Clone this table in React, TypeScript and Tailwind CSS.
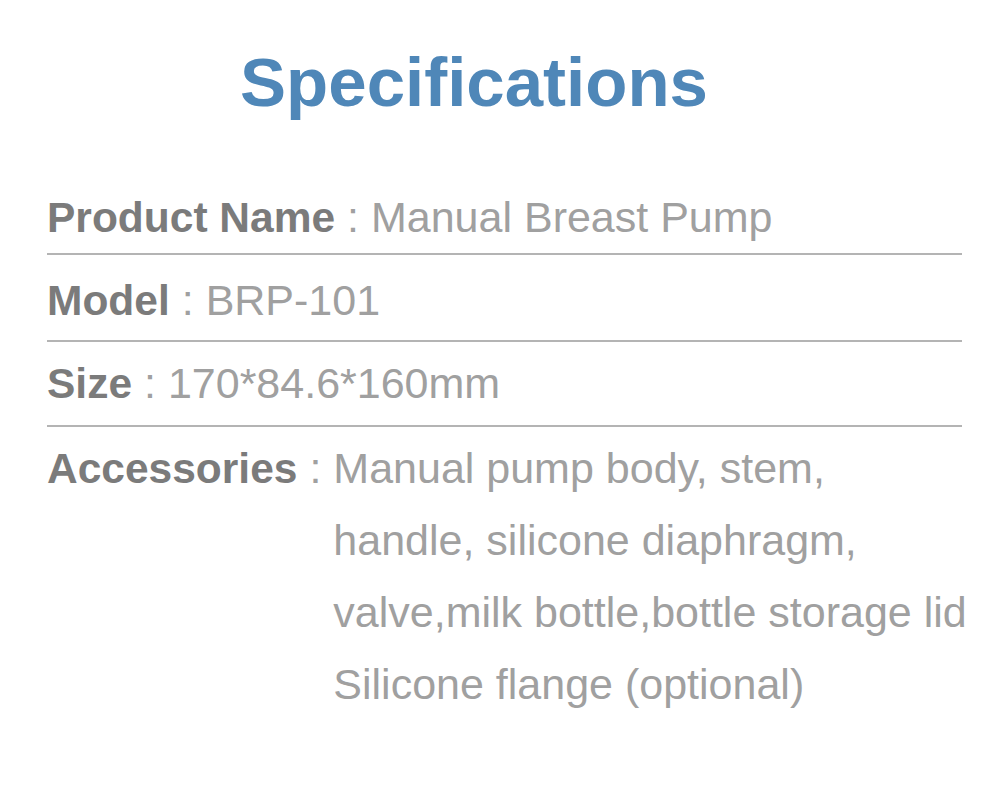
import React from "react";

const rows = [
  { label: "Product Name", value: "Manual Breast Pump", pad: "pt-[16px] pb-[10px]" },
  { label: "Model", value: "BRP-101", pad: "pt-[20px] pb-[14px]" },
  { label: "Size", value: "170*84.6*160mm", pad: "pt-[16px] pb-[16px]" },
];

const accessories = [
  "Manual pump body, stem,",
  "handle, silicone diaphragm,",
  "valve,milk bottle,bottle storage lid",
  "Silicone flange (optional)",
];

export default function App() {
  return (
    <div
      className="w-[1000px] h-[810px] bg-white overflow-hidden"
      style={{ fontFamily: '"Liberation Sans", Arial, sans-serif' }}
    >
      <div className="pt-[48px] pr-[52px] text-center">
        <h1 className="text-[69px] leading-none font-bold text-[#4f87b8]">
          Specifications
        </h1>
      </div>
      <div className="mt-[59px] ml-[47px] w-[915px] text-[43px]">
        {rows.map((r) => (
          <div
            key={r.label}
            className={`${r.pad} border-b-2 border-[#b4b4b4] leading-[50px] whitespace-nowrap text-[#a0a0a0]`}
          >
            <span className="text-[42.5px] font-bold text-[#7b7b7b]">{r.label}</span>
            <span> : {r.value}</span>
          </div>
        ))}
        <div className="pt-[5px] flex leading-[72px] whitespace-nowrap text-[#a0a0a0]">
          <span className="whitespace-pre">
            <span className="text-[42.5px] font-bold text-[#7b7b7b]">Accessories</span>
            <span> : </span>
          </span>
          <div className="flex flex-col">
            {accessories.map((a) => (
              <span key={a}>{a}</span>
            ))}
          </div>
        </div>
      </div>
    </div>
  );
}
